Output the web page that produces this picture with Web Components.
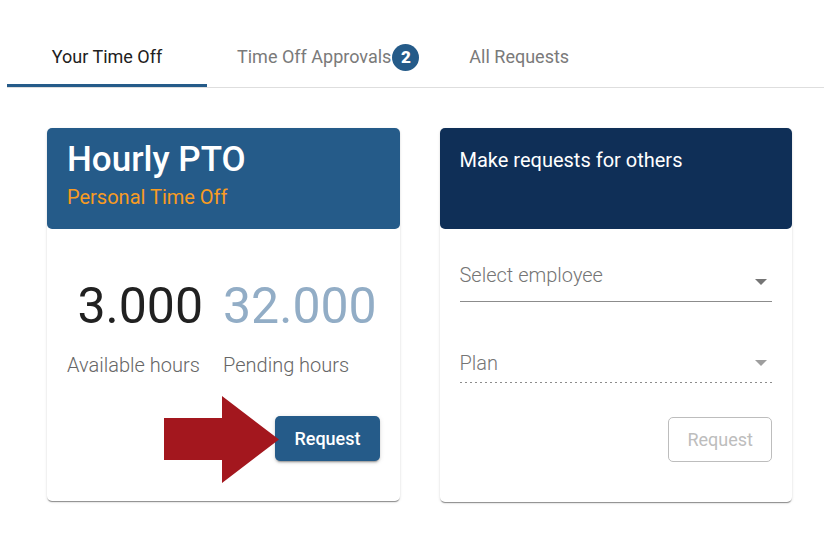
<!DOCTYPE html>
<html lang="en">
<head>
<meta charset="utf-8">
<title>Time Off</title>
<style>
	body {
		margin: 0;
		padding: 27px 0 30px;
		background: #fff;
		color: #212121;
		font-family: Roboto, "Liberation Sans", sans-serif;
	}
	main {
		display: grid;
		grid-template-columns: 1fr 1fr;
		align-items: start;
		gap: 40px;
		padding: 40px 32px 0 47px;
	}
	.hours {
		display: flex;
		gap: 20px;
	}
</style>
</head>
<body>
<tab-bar>
	<tab-item selected>Your Time Off</tab-item>
	<tab-item count="2">Time Off Approvals</tab-item>
	<tab-item>All Requests</tab-item>
</tab-bar>
<main>
	<time-card>
		<card-title slot="header" size="large" subtitle="Personal Time Off">Hourly PTO</card-title>
		<div class="hours">
			<hour-count value="3.000">Available hours</hour-count>
			<hour-count value="32.000" pending>Pending hours</hour-count>
		</div>
		<request-button slot="actions" pointer>Request</request-button>
	</time-card>
	<time-card dark>
		<card-title slot="header">Make requests for others</card-title>
		<select-field label="Select employee"></select-field>
		<select-field label="Plan" disabled></select-field>
		<request-button slot="actions" disabled>Request</request-button>
	</time-card>
</main>

<script>
function makeTemplate(html) {
	const template = document.createElement("template");
	template.innerHTML = html;
	return template;
}

class BaseElement extends HTMLElement {
	constructor() {
		super();
		this.attachShadow({ mode: "open" });
		this.shadowRoot.appendChild(this.constructor.template.content.cloneNode(true));
	}
	find(selector) {
		return this.shadowRoot.querySelector(selector);
	}
}

class TabBar extends BaseElement {
	static template = makeTemplate(`
<style>
	:host {
		display: block;
		padding-left: 7px;
	}
	nav {
		display: flex;
		border-bottom: 1px solid #dedede;
	}
</style>
<nav role="tablist"><slot></slot></nav>`);
}

class TabItem extends BaseElement {
	static template = makeTemplate(`
<style>
	:host {
		display: block;
	}
	button {
		display: flex;
		align-items: center;
		justify-content: center;
		gap: 1px;
		height: 60px;
		padding: 3px 20px 0;
		border: 0;
		border-bottom: 3px solid transparent;
		background: none;
		color: #7a7a7a;
		font: 400 18px/24px Roboto, sans-serif;
		white-space: nowrap;
		cursor: pointer;
	}
	:host([selected]) button {
		min-width: 200px;
		border-color: #255b89;
		color: #212121;
	}
	:host([count]) button {
		padding: 3px 30px 0;
	}
	.count {
		width: 27px;
		border-radius: 50%;
		background: #255b89;
		color: #fff;
		font-size: 17px;
		font-weight: 900;
		line-height: 27px;
		text-align: center;
	}
</style>
<button type="button" role="tab"><slot></slot></button>`);
	connectedCallback() {
		const button = this.find("button");
		button.setAttribute("aria-selected", this.hasAttribute("selected"));
		if (this.hasAttribute("count")) {
			const count = document.createElement("span");
			count.className = "count";
			count.textContent = this.getAttribute("count");
			button.appendChild(count);
		}
	}
}

class TimeCard extends BaseElement {
	static template = makeTemplate(`
<style>
	:host {
		display: block;
		border-radius: 5px;
		background: #fff;
		box-shadow: 0 2px 1px -1px rgba(0,0,0,.3), 0 1px 1px rgba(0,0,0,.14), 0 1px 3px rgba(0,0,0,.12);
	}
	header {
		box-sizing: border-box;
		min-height: 101px;
		padding: 12px 20px;
		border-radius: 5px;
		background: #255b89;
		color: #fff;
	}
	:host([dark]) header {
		background: #0f2f57;
	}
	.body {
		padding: 34px 20px;
	}
	footer {
		display: flex;
		justify-content: flex-end;
		padding: 0 20px 40px;
	}
</style>
<header><slot name="header"></slot></header>
<div class="body"><slot></slot></div>
<footer><slot name="actions"></slot></footer>`);
}

class CardTitle extends BaseElement {
	static template = makeTemplate(`
<style>
	:host {
		display: block;
	}
	h2 {
		margin: 0;
		font-size: 20px;
		font-weight: 400;
		line-height: 40px;
	}
	:host([size=large]) h2 {
		font-size: 35px;
		font-weight: 500;
	}
	p {
		margin: 5px 0 0;
		color: #f89b22;
		font-size: 20px;
		line-height: 24px;
	}
	p:empty {
		display: none;
	}
</style>
<h2><slot></slot></h2>
<p></p>`);
	connectedCallback() {
		this.find("p").textContent = this.getAttribute("subtitle") || "";
	}
}

class HourCount extends BaseElement {
	static template = makeTemplate(`
<style>
	:host {
		display: block;
		min-width: 136px;
	}
	.value {
		font-size: 50px;
		font-weight: 400;
		line-height: 86px;
		text-align: right;
	}
	:host([pending]) .value {
		color: #92adc6;
		text-align: left;
	}
	.label {
		margin-top: 4px;
		padding-bottom: 5px;
		color: #666;
		font-size: 20px;
		font-weight: 300;
		line-height: 24px;
		white-space: nowrap;
	}
</style>
<div class="value"></div>
<div class="label"><slot></slot></div>`);
	connectedCallback() {
		this.find(".value").textContent = this.getAttribute("value");
	}
}

class SelectField extends BaseElement {
	static template = makeTemplate(`
<style>
	:host {
		display: grid;
		align-items: center;
		height: 38px;
		border-bottom: 1px solid #8c8c8c;
	}
	:host([disabled]) {
		margin-top: 42px;
		padding-bottom: 1px;
		border-bottom: 0;
		background: repeating-linear-gradient(to right, #8c8c8c 0 2px, transparent 2px 5px) bottom / 100% 1px no-repeat;
	}
	label, select, svg {
		grid-area: 1 / 1;
	}
	label {
		align-self: start;
		color: #757575;
		font-size: 20px;
		font-weight: 300;
		line-height: 24px;
		pointer-events: none;
	}
	:host([disabled]) label {
		align-self: center;
	}
	select {
		width: 100%;
		height: 100%;
		border: 0;
		appearance: none;
		background: none;
		opacity: 1;
		font: 300 20px Roboto, sans-serif;
	}
	svg {
		justify-self: end;
		margin-right: 5px;
		fill: #757575;
		pointer-events: none;
	}
	:host([disabled]) svg {
		fill: #9e9e9e;
	}
</style>
<select id="field"><option></option></select>
<label for="field"></label>
<svg width="12" height="6" viewBox="0 0 12 6" aria-hidden="true"><path d="M0 0h12L6 6z"/></svg>`);
	connectedCallback() {
		this.find("label").textContent = this.getAttribute("label");
		this.find("select").disabled = this.hasAttribute("disabled");
	}
}

class RequestButton extends BaseElement {
	static template = makeTemplate(`
<style>
	:host {
		display: block;
		position: relative;
	}
	button {
		display: block;
		height: 45px;
		padding: 0 19px;
		border: 0;
		border-radius: 5px;
		background: #255b89;
		box-shadow: 0 3px 1px -2px rgba(0,0,0,.2), 0 2px 2px rgba(0,0,0,.14), 0 1px 5px rgba(0,0,0,.12);
		color: #fff;
		font: 500 18px/24px Roboto, sans-serif;
		cursor: pointer;
	}
	button:disabled {
		padding: 0 18px;
		border: 1px solid #bdbdbd;
		background: #fff;
		box-shadow: none;
		color: #bdbdbd;
		font-weight: 400;
		cursor: default;
	}
	/* arrow lies over the card and touches the button edge */
	svg {
		display: none;
		position: absolute;
		top: -20px;
		right: 101px;
		fill: #a3171e;
		pointer-events: none;
	}
	:host([pointer]) svg {
		display: block;
	}
</style>
<button type="button"><slot></slot></button>
<svg width="115" height="87" viewBox="0 0 115 87" aria-hidden="true"><path d="M0 22h58V0l57 43.500L58 87V64H0z"/></svg>`);
	connectedCallback() {
		this.find("button").disabled = this.hasAttribute("disabled");
	}
}

customElements.define("tab-bar", TabBar);
customElements.define("tab-item", TabItem);
customElements.define("time-card", TimeCard);
customElements.define("card-title", CardTitle);
customElements.define("hour-count", HourCount);
customElements.define("select-field", SelectField);
customElements.define("request-button", RequestButton);
</script>
</body>
</html>
